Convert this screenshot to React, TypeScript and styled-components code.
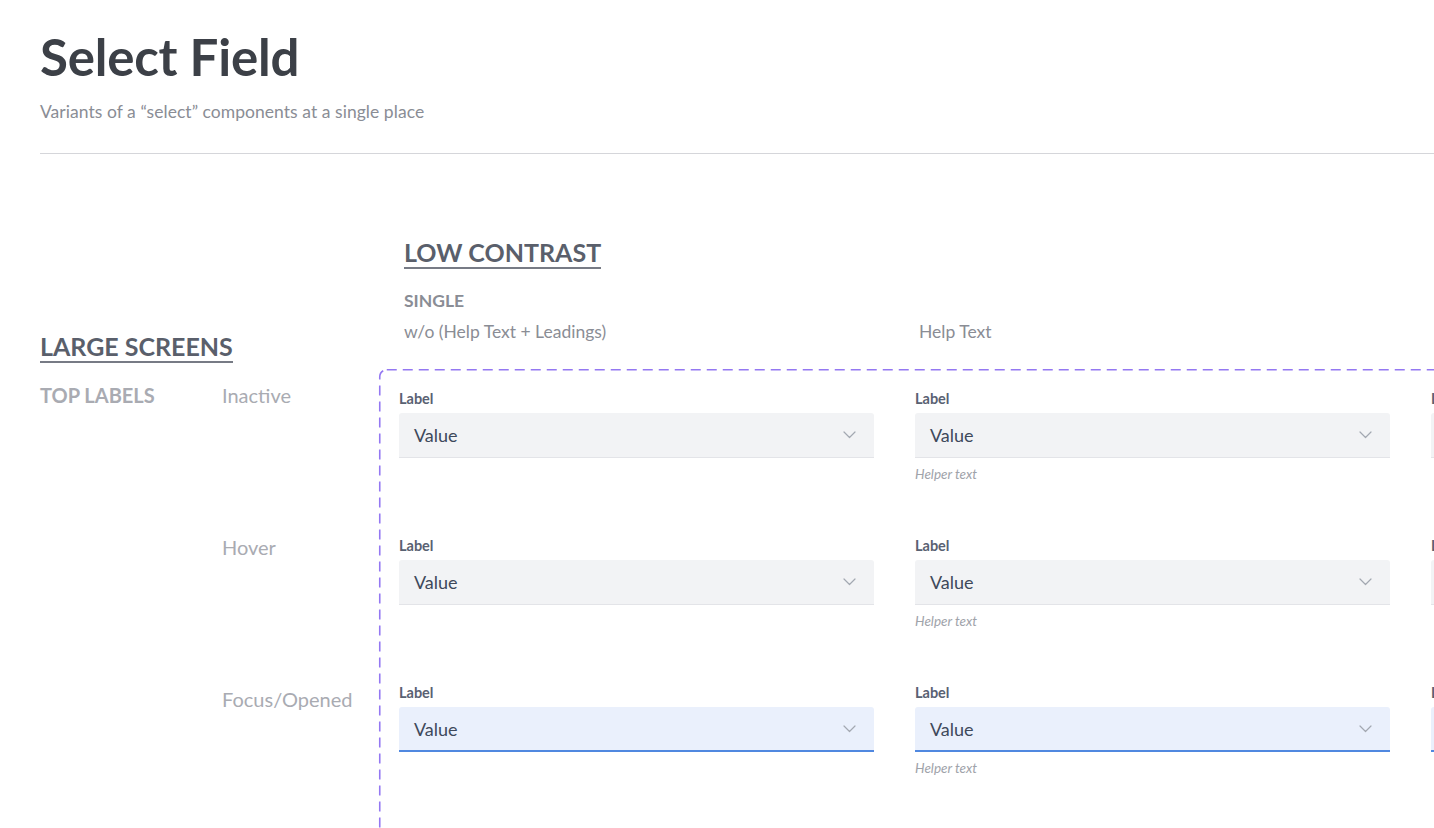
import styled, { createGlobalStyle } from "styled-components";

const GlobalStyle = createGlobalStyle`
  html, body {
    margin: 0;
    padding: 0;
    background: #ffffff;
    overflow: hidden;
  }
  body {
    font-family: Lato, "Open Sans", "Liberation Sans", sans-serif;
  }
`;

type State = "inactive" | "hover" | "focus";

const states: { name: string; state: State }[] = [
  { name: "Inactive", state: "inactive" },
  { name: "Hover", state: "hover" },
  { name: "Focus/Opened", state: "focus" },
];

const Chevron = () => (
  <svg width="13" height="8" viewBox="0 0 13 8" fill="none">
    <polyline
      points="1,1 6.5,6.5 12,1"
      stroke="#a3a8b1"
      strokeWidth="1.2"
      strokeLinecap="round"
      strokeLinejoin="round"
    />
  </svg>
);

const SelectField = ({ state, helper }: { state: State; helper?: boolean }) => (
  <FieldCell>
    <FieldLabel>Label</FieldLabel>
    <FieldBox $focus={state === "focus"}>
      <FieldValue>Value</FieldValue>
      <Chevron />
    </FieldBox>
    {helper && <HelperText>Helper text</HelperText>}
  </FieldCell>
);

const App = () => {
  return (
    <>
      <GlobalStyle />
      <Page>
        <Header>
          <Title>Select Field</Title>
          <Subtitle>Variants of a “select” components at a single place</Subtitle>
        </Header>
        <Divider />
        <Board>
          <SideHead>
            <Underlined>LARGE SCREENS</Underlined>
          </SideHead>
          <MainHead>
            <Underlined>LOW CONTRAST</Underlined>
            <GroupTitle>SINGLE</GroupTitle>
            <VariantRow>
              <VariantName>w/o (Help Text + Leadings)</VariantName>
              <VariantName>Help Text</VariantName>
            </VariantRow>
          </MainHead>
          <Side>
            {states.map((s, i) => (
              <SideRow key={s.name}>
                <GroupLabel>{i === 0 ? "TOP LABELS" : ""}</GroupLabel>
                <StateLabel>{s.name}</StateLabel>
              </SideRow>
            ))}
          </Side>
          <Canvas>
            <DashedOutline>
              <rect x="0.75" y="0.75" rx="7" ry="7" />
            </DashedOutline>
            <FieldGrid>
              {states.map((s) => (
                <FieldRow key={s.name}>
                  <SelectField state={s.state} />
                  <SelectField state={s.state} helper />
                  <SelectField state={s.state} />
                </FieldRow>
              ))}
            </FieldGrid>
          </Canvas>
        </Board>
      </Page>
    </>
  );
};

const Page = styled.div`
  width: 1434px;
  height: 828px;
  overflow: hidden;
  padding-left: 40px;
  box-sizing: border-box;
`;

const Header = styled.div`
  padding-top: 26px;
`;

const Title = styled.h1`
  margin: 0;
  font-size: 51px;
  line-height: 62px;
  font-weight: 700;
  color: #3c4047;
  letter-spacing: -0.2px;
`;

const Subtitle = styled.p`
  margin: 14px 0 0;
  font-size: 17.5px;
  line-height: 20px;
  letter-spacing: 0.05px;
  color: #8a8d95;
`;

const Divider = styled.div`
  margin-top: 31px;
  height: 1px;
  width: 1500px;
  background: #d5d6da;
`;

const Board = styled.div`
  display: grid;
  grid-template-columns: 339px 1fr;
  grid-template-rows: auto 1fr;
  margin-top: 83px;
`;

const SideHead = styled.div`
  align-self: end;
  padding-bottom: 6px;
`;

const MainHead = styled.div`
  padding-left: 25px;
  padding-bottom: 27px;
`;

const Underlined = styled.div`
  display: inline-block;
  font-size: 25px;
  line-height: 30px;
  font-weight: 700;
  color: #5a5f6b;
  border-bottom: 2px solid #777b85;
`;

const GroupTitle = styled.div`
  margin-top: 21px;
  font-size: 17.5px;
  line-height: 21px;
  font-weight: 700;
  color: #8a8d95;
`;

const VariantRow = styled.div`
  display: grid;
  grid-template-columns: 515px 1fr;
  margin-top: 10px;
`;

const VariantName = styled.div`
  font-size: 17.5px;
  line-height: 21px;
  color: #8a8d95;
`;

const Side = styled.div`
  padding-top: 14px;
`;

const SideRow = styled.div`
  display: grid;
  grid-template-columns: 182px 1fr;
  height: 152px;
`;

const GroupLabel = styled.div`
  font-size: 20px;
  line-height: 24px;
  font-weight: 700;
  color: #a9abb2;
`;

const StateLabel = styled.div`
  font-size: 20px;
  line-height: 24px;
  color: #a9abb2;
`;

const Canvas = styled.div`
  position: relative;
  width: 1200px;
  height: 520px;
  padding: 21px 0 0 20px;
  box-sizing: border-box;
`;

const DashedOutline = styled.svg`
  position: absolute;
  inset: 0;
  width: 100%;
  height: 100%;
  overflow: visible;
  pointer-events: none;

  rect {
    width: calc(100% - 1.5px);
    height: calc(100% - 1.5px);
    fill: none;
    stroke: #9478f2;
    stroke-width: 1.6;
    stroke-dasharray: 10 6;
  }
`;

const FieldGrid = styled.div`
  display: flex;
  flex-direction: column;
`;

const FieldRow = styled.div`
  display: grid;
  grid-template-columns: repeat(3, 475px);
  column-gap: 41px;
  height: 147px;
`;

const FieldCell = styled.div`
  display: flex;
  flex-direction: column;
`;

const FieldLabel = styled.div`
  font-size: 14.5px;
  line-height: 17px;
  font-weight: 700;
  color: #596172;
  margin-bottom: 6px;
`;

const FieldBox = styled.div<{ $focus: boolean }>`
  display: flex;
  align-items: center;
  justify-content: space-between;
  height: 45px;
  box-sizing: border-box;
  padding: 0 18px 0 15px;
  border-radius: 3px 3px 0 0;
  background: ${(p) => (p.$focus ? "#eaf0fc" : "#f2f3f5")};
  border-bottom: ${(p) => (p.$focus ? "2px solid #5088e0" : "1px solid #e3e4e8")};
`;

const FieldValue = styled.span`
  font-size: 18px;
  line-height: 22px;
  color: #3e495b;
`;

const HelperText = styled.div`
  margin-top: 8px;
  font-size: 13.5px;
  line-height: 16px;
  font-style: italic;
  color: #a0a3aa;
`;

export default App;
